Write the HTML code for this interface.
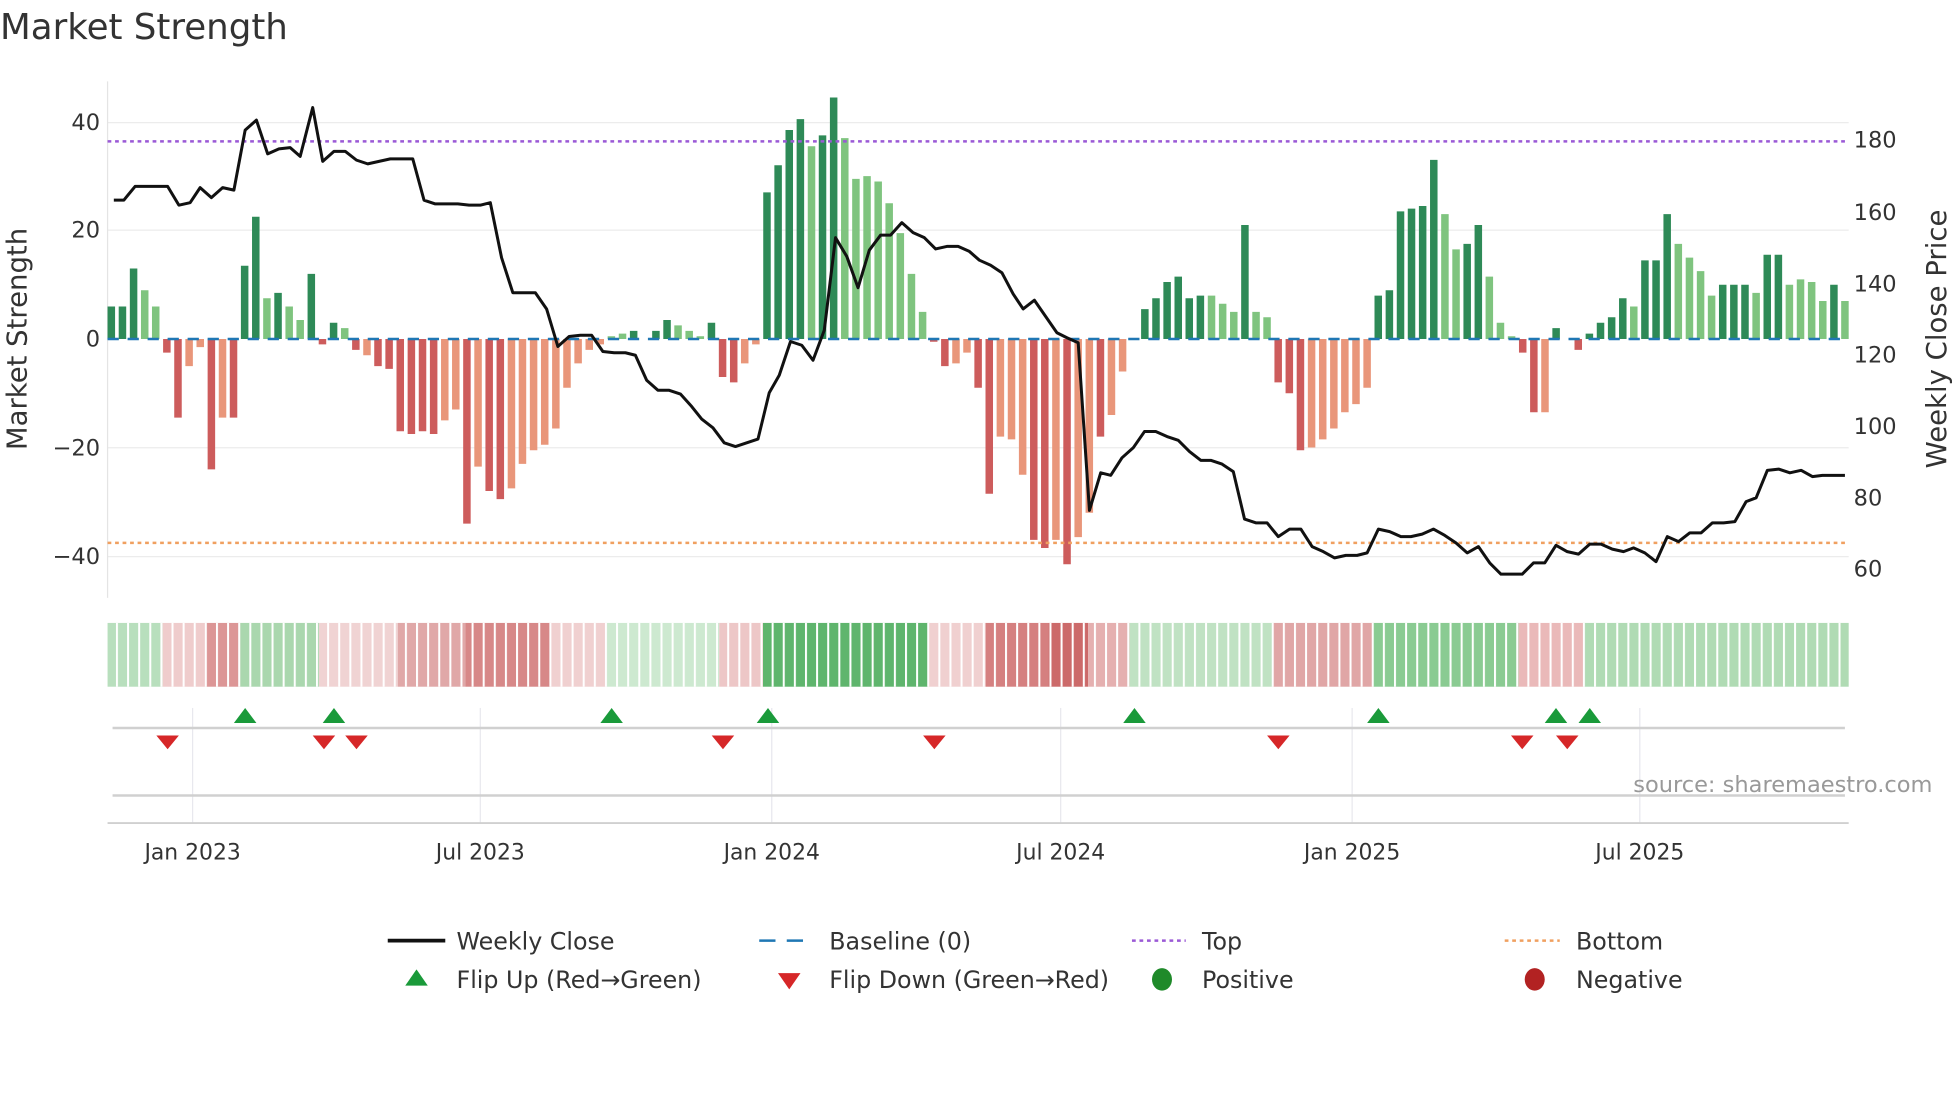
<!DOCTYPE html>
<html><head><meta charset="utf-8"><style>
html,body{margin:0;padding:0;background:#fff;width:1960px;height:1102px;overflow:hidden}
svg{display:block}
text{font-family:"DejaVu Sans","Liberation Sans",sans-serif;fill:#333}
</style></head><body>
<svg width="1960" height="1102" viewBox="0 0 1567 881" xmlns="http://www.w3.org/2000/svg">
<defs>
<pattern id="gap" patternUnits="userSpaceOnUse" x="92.7" y="0" width="8.885" height="100"><rect x="0" y="0" width="1.6" height="100" fill="#fff"/></pattern>
</defs>
<rect width="1567" height="881" fill="#fff"/>
<text x="0" y="31" font-size="28.5">Market Strength</text>
<g stroke="#ececec" stroke-width="1">
<line x1="86" y1="98" x2="1478" y2="98"/><line x1="86" y1="184" x2="1478" y2="184"/><line x1="86" y1="358" x2="1478" y2="358"/><line x1="86" y1="445" x2="1478" y2="445"/>
<line x1="86" y1="65" x2="86" y2="478" stroke="#e4e4e4"/>
</g>
<path fill="#2e8a57" d="M86,271v-26h6v26zM94.9,271v-26h6v26zM103.8,271v-56.4h6v56.4zM192.6,271v-58.6h6v58.6zM201.5,271v-97.7h6v97.7zM219.3,271v-36.9h6v36.9zM245.9,271v-52.1h6v52.1zM263.7,271v-13h6v13zM503.6,271v-6.5h6v6.5zM521.4,271v-6.5h6v6.5zM530.3,271v-15.2h6v15.2zM565.8,271v-13h6v13zM610.2,271v-117.2h6v117.2zM619.1,271v-138.9h6v138.9zM628,271v-167.1h6v167.1zM636.9,271v-175.8h6v175.8zM654.6,271v-162.8h6v162.8zM663.5,271v-193.1h6v193.1zM912.3,271v-23.9h6v23.9zM921.2,271v-32.6h6v32.6zM930.1,271v-45.6h6v45.6zM939,271v-49.9h6v49.9zM947.8,271v-32.6h6v32.6zM956.7,271v-34.7h6v34.7zM992.3,271v-91.1h6v91.1zM1098.9,271v-34.7h6v34.7zM1107.8,271v-39h6v39zM1116.7,271v-102h6v102zM1125.5,271v-104.2h6v104.2zM1134.4,271v-106.3h6v106.3zM1143.3,271v-143.2h6v143.2zM1170,271v-76h6v76zM1178.9,271v-91.1h6v91.1zM1241.1,271v-8.7h6v8.7zM1267.7,271v-4.3h6v4.3zM1276.6,271v-13h6v13zM1285.5,271v-17.4h6v17.4zM1294.4,271v-32.6h6v32.6zM1312.1,271v-62.9h6v62.9zM1321,271v-62.9h6v62.9zM1329.9,271v-99.8h6v99.8zM1374.3,271v-43.4h6v43.4zM1383.2,271v-43.4h6v43.4zM1392.1,271v-43.4h6v43.4zM1409.9,271v-67.3h6v67.3zM1418.8,271v-67.3h6v67.3zM1463.2,271v-43.4h6v43.4z"/>
<path fill="#7fc47f" d="M112.7,271v-39h6v39zM121.5,271v-26h6v26zM210.4,271v-32.6h6v32.6zM228.2,271v-26h6v26zM237,271v-15.2h6v15.2zM272.6,271v-8.7h6v8.7zM485.8,271v-2.2h6v2.2zM494.7,271v-4.3h6v4.3zM539.1,271v-10.9h6v10.9zM548,271v-6.5h6v6.5zM556.9,271v-2.2h6v2.2zM645.8,271v-154.1h6v154.1zM672.4,271v-160.6h6v160.6zM681.3,271v-128h6v128zM690.2,271v-130.2h6v130.2zM699.1,271v-125.9h6v125.9zM707.9,271v-108.5h6v108.5zM716.8,271v-84.6h6v84.6zM725.7,271v-52.1h6v52.1zM734.6,271v-21.7h6v21.7zM965.6,271v-34.7h6v34.7zM974.5,271v-28.2h6v28.2zM983.4,271v-21.7h6v21.7zM1001.2,271v-21.7h6v21.7zM1010,271v-17.4h6v17.4zM1152.2,271v-99.8h6v99.8zM1161.1,271v-71.6h6v71.6zM1187.7,271v-49.9h6v49.9zM1196.6,271v-13h6v13zM1205.5,271v-2.2h6v2.2zM1303.2,271v-26h6v26zM1338.8,271v-76h6v76zM1347.7,271v-65.1h6v65.1zM1356.6,271v-54.3h6v54.3zM1365.4,271v-34.7h6v34.7zM1401,271v-36.9h6v36.9zM1427.6,271v-43.4h6v43.4zM1436.5,271v-47.7h6v47.7zM1445.4,271v-45.6h6v45.6zM1454.3,271v-30.4h6v30.4zM1472,271v-30.4h6v30.4z"/>
<path fill="#cd5c5c" d="M130.4,271v10.9h6v-10.9zM139.3,271v62.9h6v-62.9zM166,271v104.2h6v-104.2zM183.7,271v62.9h6v-62.9zM254.8,271v4.3h6v-4.3zM281.5,271v8.7h6v-8.7zM299.2,271v21.7h6v-21.7zM308.1,271v23.9h6v-23.9zM317,271v73.8h6v-73.8zM325.9,271v76h6v-76zM334.8,271v73.8h6v-73.8zM343.7,271v76h6v-76zM370.3,271v147.6h6v-147.6zM388.1,271v121.5h6v-121.5zM397,271v128h6v-128zM574.7,271v30.4h6v-30.4zM583.6,271v34.7h6v-34.7zM743.5,271v2.2h6v-2.2zM752.4,271v21.7h6v-21.7zM779,271v39h6v-39zM787.9,271v123.7h6v-123.7zM823.5,271v160.6h6v-160.6zM832.3,271v167.1h6v-167.1zM850.1,271v180.1h6v-180.1zM876.8,271v78.1h6v-78.1zM1018.9,271v34.7h6v-34.7zM1027.8,271v43.4h6v-43.4zM1036.7,271v89h6v-89zM1214.4,271v10.9h6v-10.9zM1223.3,271v58.6h6v-58.6zM1258.8,271v8.7h6v-8.7z"/>
<path fill="#e9967a" d="M148.2,271v21.7h6v-21.7zM157.1,271v6.5h6v-6.5zM174.9,271v62.9h6v-62.9zM290.4,271v13h6v-13zM352.6,271v65.1h6v-65.1zM361.4,271v56.4h6v-56.4zM379.2,271v102h6v-102zM405.9,271v119.4h6v-119.4zM414.7,271v99.8h6v-99.8zM423.6,271v89h6v-89zM432.5,271v84.6h6v-84.6zM441.4,271v71.6h6v-71.6zM450.3,271v39h6v-39zM459.2,271v19.5h6v-19.5zM468.1,271v8.7h6v-8.7zM476.9,271v4.3h6v-4.3zM592.4,271v19.5h6v-19.5zM601.3,271v4.3h6v-4.3zM761.3,271v19.5h6v-19.5zM770.1,271v10.9h6v-10.9zM796.8,271v78.1h6v-78.1zM805.7,271v80.3h6v-80.3zM814.6,271v108.5h6v-108.5zM841.2,271v160.6h6v-160.6zM859,271v158.4h6v-158.4zM867.9,271v138.9h6v-138.9zM885.6,271v60.8h6v-60.8zM894.5,271v26h6v-26zM1045.6,271v86.8h6v-86.8zM1054.5,271v80.3h6v-80.3zM1063.4,271v71.6h6v-71.6zM1072.2,271v58.6h6v-58.6zM1081.1,271v52.1h6v-52.1zM1090,271v39h6v-39zM1232.2,271v58.6h6v-58.6z"/>
<line x1="86" y1="271" x2="1478" y2="271" stroke="#1f77b4" stroke-width="2" stroke-dasharray="9,7"/>
<line x1="86" y1="113" x2="1478" y2="113" stroke="#9b59d6" stroke-width="2" stroke-dasharray="3,3"/>
<line x1="86" y1="434" x2="1478" y2="434" stroke="#f0a060" stroke-width="2" stroke-dasharray="3,3"/>
<polyline fill="none" stroke="#111" stroke-width="2.4" stroke-linejoin="round" points="91,160 99,160 108,149 116,149 125,149 134,149 143,164 152,162 160,150 169,158 178,150 187,152 196,104 205,96 214,123 223,119 232,118 240,125 250,86 258,129 267,121 276,121 285,128 294,131 303,129 312,127 321,127 330,127 339,160 348,163 357,163 366,163 375,164 384,164 392,162 401,206 410,234 419,234 428,234 437,247 446,277 455,269 464,268 473,268 482,281 491,282 500,282 508,284 517,304 526,312 535,312 544,315 553,325 561,335 570,342 579,354 588,357 597,354 606,351 615,314 623,300 632,273 641,276 650,288 659,264 668,190 677,205 686,230 695,200 704,188 712,188 721,178 730,186 739,190 748,199 757,197 766,197 775,201 783,208 792,212 801,218 810,235 818,247 827,240 836,253 845,266 853,270 862,274 871,408 880,378 888,380 897,366 906,358 915,345 924,345 933,349 942,352 951,361 960,368 968,368 977,371 986,377 995,415 1004,418 1013,418 1022,429 1031,423 1040,423 1049,437 1058,441 1067,446 1076,444 1085,444 1093,442 1102,423 1111,425 1120,429 1128,429 1137,427 1146,423 1155,428 1164,434 1173,442 1182,437 1191,450 1200,459 1208,459 1217,459 1226,450 1235,450 1244,436 1253,441 1262,443 1271,435 1280,435 1289,439 1298,441 1306,438 1315,442 1324,449 1333,429 1342,433 1351,426 1360,426 1369,418 1378,418 1387,417 1396,401 1404,398 1413,376 1422,375 1431,378 1440,376 1449,381 1457,380 1466,380 1475,380"/>
<g font-size="18" text-anchor="end">
<text x="80" y="104">40</text><text x="80" y="190">20</text><text x="80" y="277">0</text><text x="80" y="364">−20</text><text x="80" y="451">−40</text>
</g>
<g font-size="18">
<text x="1482" y="118">180</text><text x="1482" y="176">160</text><text x="1482" y="233">140</text><text x="1482" y="290">120</text><text x="1482" y="347">100</text><text x="1482" y="404">80</text><text x="1482" y="461">60</text>
</g>
<text transform="translate(21,271) rotate(-90)" font-size="22" text-anchor="middle">Market Strength</text>
<text transform="translate(1556,271) rotate(-90)" font-size="22" text-anchor="middle">Weekly Close Price</text>
<g>
<rect x="86" y="498" width="44" height="51" fill="#b8dfbd"/>
<rect x="130" y="498" width="35" height="51" fill="#efcccc"/>
<rect x="165" y="498" width="27" height="51" fill="#dc9696"/>
<rect x="192" y="498" width="63" height="51" fill="#aad7ae"/>
<rect x="255" y="498" width="63" height="51" fill="#f0d3d3"/>
<rect x="318" y="498" width="54" height="51" fill="#e0a8a8"/>
<rect x="372" y="498" width="68" height="51" fill="#d78888"/>
<rect x="440" y="498" width="45" height="51" fill="#f0d0d0"/>
<rect x="485" y="498" width="90" height="51" fill="#cde9d0"/>
<rect x="575" y="498" width="35" height="51" fill="#edc7c7"/>
<rect x="610" y="498" width="132" height="51" fill="#5fb56d"/>
<rect x="742" y="498" width="46" height="51" fill="#f0d0d0"/>
<rect x="788" y="498" width="50" height="51" fill="#d58080"/>
<rect x="838" y="498" width="32" height="51" fill="#cc6a6a"/>
<rect x="870" y="498" width="33" height="51" fill="#e5b0b0"/>
<rect x="903" y="498" width="115" height="51" fill="#c0e2c3"/>
<rect x="1018" y="498" width="80" height="51" fill="#e0a6a6"/>
<rect x="1098" y="498" width="116" height="51" fill="#8acb92"/>
<rect x="1214" y="498" width="52" height="51" fill="#eab9b9"/>
<rect x="1266" y="498" width="212" height="51" fill="#b0dbb4"/>
<rect x="86" y="498" width="1392" height="51" fill="url(#gap)"/>
</g>
<g stroke="#e8e8ee" stroke-width="1">
<line x1="154" y1="566" x2="154" y2="658"/><line x1="384" y1="566" x2="384" y2="658"/><line x1="617" y1="566" x2="617" y2="658"/><line x1="848" y1="566" x2="848" y2="658"/><line x1="1081" y1="566" x2="1081" y2="658"/><line x1="1311" y1="566" x2="1311" y2="658"/>
</g>
<line x1="90" y1="582" x2="1475" y2="582" stroke="#d0d0d0" stroke-width="2"/>
<line x1="90" y1="636" x2="1475" y2="636" stroke="#d0d0d0" stroke-width="2"/>
<line x1="86" y1="658" x2="1478" y2="658" stroke="#d0d0d0" stroke-width="1.5"/>
<path fill="#1a9a3a" d="M187,578L196,566L205,578ZM258,578L267,566L276,578ZM480,578L489,566L498,578ZM605,578L614,566L623,578ZM898,578L907,566L916,578ZM1093,578L1102,566L1111,578ZM1235,578L1244,566L1253,578ZM1262,578L1271,566L1280,578Z"/>
<path fill="#d62728" d="M125,588L143,588L134,599ZM250,588L268,588L259,599ZM276,588L294,588L285,599ZM569,588L587,588L578,599ZM738,588L756,588L747,599ZM1013,588L1031,588L1022,599ZM1208,588L1226,588L1217,599ZM1244,588L1262,588L1253,599Z"/>
<text x="1545" y="633" font-size="18" text-anchor="end" style="fill:#999">source: sharemaestro.com</text>
<g font-size="17.5" text-anchor="middle">
<text x="154" y="687">Jan 2023</text><text x="384" y="687">Jul 2023</text><text x="617" y="687">Jan 2024</text><text x="848" y="687">Jul 2024</text><text x="1081" y="687">Jan 2025</text><text x="1311" y="687">Jul 2025</text>
</g>
<g font-size="19">
<line x1="310" y1="752" x2="356" y2="752" stroke="#111" stroke-width="3"/><text x="365" y="759">Weekly Close</text>
<line x1="607" y1="752" x2="650" y2="752" stroke="#1f77b4" stroke-width="2" stroke-dasharray="13,9"/><text x="663" y="759">Baseline (0)</text>
<line x1="905" y1="752" x2="948" y2="752" stroke="#9b59d6" stroke-width="2" stroke-dasharray="3,3"/><text x="961" y="759">Top</text>
<line x1="1203" y1="752" x2="1247" y2="752" stroke="#f0a060" stroke-width="2" stroke-dasharray="3,3"/><text x="1260" y="759">Bottom</text>
<path d="M324,788 L333,775 L342,788Z" fill="#1a9a3a"/><text x="365" y="790">Flip Up (Red→Green)</text>
<path d="M622,778 L640,778 L631,791Z" fill="#d62728"/><text x="663" y="790">Flip Down (Green→Red)</text>
<ellipse cx="929" cy="783" rx="8" ry="9" fill="#1f8a2a"/><text x="961" y="790">Positive</text>
<ellipse cx="1227" cy="783" rx="8" ry="9" fill="#b22222"/><text x="1260" y="790">Negative</text>
</g>
</svg>
</body></html>
